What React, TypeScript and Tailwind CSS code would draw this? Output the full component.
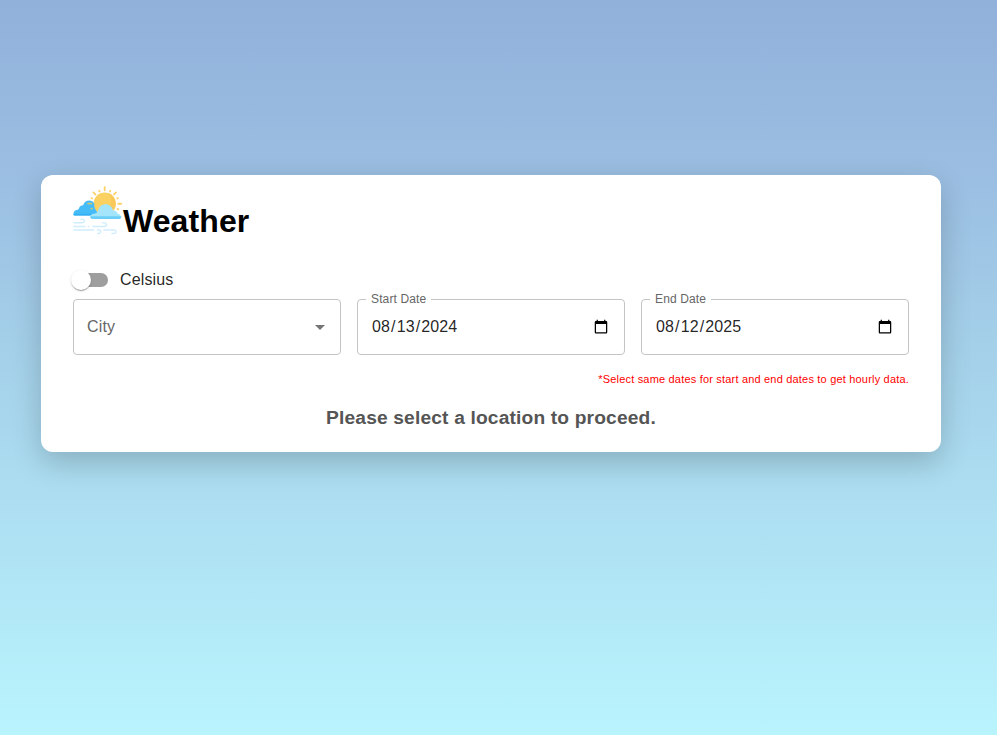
import React from "react";

function WeatherLogo() {
  return (
    <svg width="50" height="50" viewBox="0 0 50 50" fill="none" className="shrink-0">
      <circle cx="31.7" cy="17.7" r="11.2" fill="#fbd162" />
      <path d="M35.500 7.200A11.200 11.200 0 0 1 41.800 22L32 26a13 13 0 0 0 3.500-18.800Z" fill="#f8c85a" />
      <path d="M.5 28.200c0-2.600 1.400-4.200 3.900-4.400.9-.1 1.300-.7 1.700-1.900.6-1.800 2-2.700 4-2.700C11 16.300 13.300 14.400 16.300 14.400c2.200 0 4 1.100 4.900 2.900a11.200 11.200 0 0 0 3.500 9.200l-5 2.900H1.500c-.7 0-1-.4-1-1.200Z" fill="#45bcf8" />
      <path d="M.5 27.700h20v1.700H1.500c-.7 0-1-.6-1-1.700Z" fill="#36b0f4" />
      <g stroke="#fbd36a" strokeWidth="1.9" strokeLinecap="round">
        <path d="M31.700 1.300v2.900M20.400 6.400l2 2M43 6.400l-2 2M45.300 17.700h2.900" />
        <path d="M26.200 4.800l.3.700M37.200 4.800l-.3.700M18.500 12.200l.7.300M44.900 12.200l-.7.300M44.500 23l.8.300" />
      </g>
      <path d="M15 17.600h3.600M18.200 22.800l1-.3" stroke="#c7c977" strokeWidth="1.600" strokeLinecap="round" />
      <path d="M17.300 31c.1-2.100 1.200-3 3.500-3.200 2.500-.2 3.600-1.200 4.300-3.600 1-3.700 3.700-5.900 7.400-5.900 3.900 0 6.600 2.300 7.400 6.100 3-.1 4.300 1.200 4.700 3.300 2 .1 3.100 1.200 3.200 3.300l-15 1.200-15.500-1.200Z" fill="#a4e5fc" />
      <path d="M17.200 30.300h31.200c0 1.800-.7 2.600-1.900 2.600H19.200c-1.300 0-2-.8-2-2.600Z" fill="#6bcef7" />
      <g stroke="#cfedfd" strokeWidth="1.400" strokeLinecap="round">
        <path d="M.9 36.800h8.800c2.200 0 2.200-3.400 0-3.400H8M.9 40.500h10.900M15.300 40.500h.5M20 40.500h11.500c2.700 0 2.700-3.600 0-3.600h-2M.9 44h19.600M24.500 44h1.500c2.200 0 2.200 3.500 0 3.500h-1.400M31 44h10.200c2.400 0 2.400 3.500 0 3.500h-2.300" />
      </g>
    </svg>
  );
}

function DateField({ label, value }: { label: string; value: string }) {
  return (
    <fieldset className="-mt-[5px] h-[61px] w-[268px] min-w-0 rounded border border-[#c4c4c4] px-2">
      <legend className="h-[11px] px-[5px] text-xs leading-[11px] tracking-[0.13px] text-[#666]">{label}</legend>
      <input
        type="date"
        defaultValue={value}
        aria-label={label}
        className="mt-[10px] block h-[23px] w-full bg-transparent px-[5px] text-base leading-[23px] tracking-[0.12px] outline-none"
      />
    </fieldset>
  );
}

export default function App() {
  return (
    <main className="h-[735px] bg-[linear-gradient(180deg,#91b0da_0%,#9bbfe2_25%,#a5d2ea_50%,#b9f4fd_100%)] pl-[41px] pt-[175px] font-['Liberation_Sans',Arial,sans-serif] text-[rgba(0,0,0,0.87)]">
      <section className="h-[277px] w-[900px] rounded-xl bg-white px-8 pt-[11px] shadow-[0_10px_30px_rgba(0,0,0,0.2)]">
        <header className="flex h-[50px]">
          <WeatherLogo />
          <h1 className="pt-[17px] text-[32px] font-bold leading-[37px] tracking-[0.1px] text-black">Weather</h1>
        </header>
        <div className="mt-[32px] flex h-6 items-center">
          <div className="flex h-5 w-9 items-center">
            <div className="flex h-[14px] w-[34px] translate-x-px items-center rounded-full bg-[#9e9e9e]">
              <div className="size-5 shrink-0 -translate-x-[3px] rounded-full bg-white shadow-[0_2px_1px_-1px_rgba(0,0,0,0.2),0_1px_1px_rgba(0,0,0,0.14),0_1px_3px_rgba(0,0,0,0.12)]" />
            </div>
          </div>
          <span className="ml-[11px] text-base leading-6 tracking-[0.15px]">Celsius</span>
        </div>
        <div className="mt-[7px] flex gap-4">
          <div className="flex h-14 w-[268px] items-center justify-between rounded border border-[#c4c4c4] pl-[13px] pr-2 text-base text-[#666]">
            <span className="-mt-px tracking-[0.15px]">City</span>
            <svg width="24" height="24" viewBox="0 0 24 24" fill="#757575">
              <path d="m7 10 5 5 5-5z" />
            </svg>
          </div>
          <DateField label="Start Date" value="2024-08-13" />
          <DateField label="End Date" value="2025-08-12" />
        </div>
        <p className="mt-[18px] text-right text-[11px] leading-[13px] tracking-[0.19px] text-[#f00]">*Select same dates for start and end dates to get hourly data.</p>
        <h2 className="mt-5 text-center text-[19.2px] font-bold leading-6 tracking-[0.16px] text-[#555]">Please select a location to proceed.</h2>
      </section>
    </main>
  );
}
